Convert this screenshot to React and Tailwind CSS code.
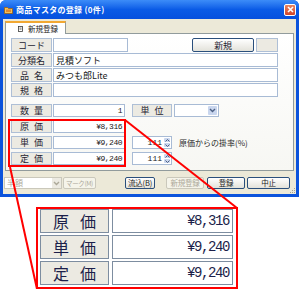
import React from 'react';

const Chevron = ({ color = '#4D6185' }) => (
  <svg width="7" height="5" viewBox="0 0 7 5">
    <path d="M1 1 L3.5 3.5 L6 1" fill="none" stroke={color} strokeWidth="1.4" />
  </svg>
);

function Label({ chars, gap = 'gap-[5px]', w = 'w-[41px]' }) {
  return (
    <div className={`${w} h-full shrink-0 flex items-center justify-center ${gap} bg-[#ECEAE2] border border-[#AEBFD6] text-[9px] text-[#1E2433]`}>
      {chars.map((c, i) => (
        <span key={i}>{c}</span>
      ))}
    </div>
  );
}

function Input({ w, children, right = false }) {
  return (
    <div className={`${w} h-full ml-px flex items-center ${right ? 'justify-end' : ''} px-[2px] bg-white border border-[#A8BBD5] text-[9px] text-[#1A1A1A]`}>
      {children}
    </div>
  );
}

function Money({ value }) {
  return (
    <div className="w-[72px] h-full ml-px flex items-center justify-end pr-[2px] bg-white border border-[#A8BBD5] font-['Liberation_Mono',monospace] text-[8px] tracking-[-0.5px] text-[#1A1A1A]">
      {value}
    </div>
  );
}

function Spinner({ value }) {
  return (
    <div className="w-[40px] h-full ml-[7px] flex bg-white border border-[#A8BBD5]">
      <div className="flex-1 flex items-center justify-end pr-[1px] font-['Liberation_Mono',monospace] text-[8px] text-[#1A1A1A]">{value}</div>
      <div className="w-[8px] flex flex-col gap-px p-px">
        <div className="flex-1 bg-[#C9D6EE] rounded-[1px] flex items-center justify-center">
          <svg width="5" height="3" viewBox="0 0 5 3"><path d="M0.5 2.5 L2.5 0.5 L4.5 2.5" fill="none" stroke="#4D6185" strokeWidth="1" /></svg>
        </div>
        <div className="flex-1 bg-[#C9D6EE] rounded-[1px] flex items-center justify-center">
          <svg width="5" height="3" viewBox="0 0 5 3"><path d="M0.5 0.5 L2.5 2.5 L4.5 0.5" fill="none" stroke="#4D6185" strokeWidth="1" /></svg>
        </div>
      </div>
    </div>
  );
}

function XpButton({ w, ml, children, disabled = false, size = 'text-[7.5px] tracking-[-0.2px]' }) {
  return (
    <div
      className={`${w} ${ml} h-full shrink-0 overflow-hidden whitespace-nowrap flex items-center justify-center rounded-[2px] border ${size} ${
        disabled
          ? 'border-[#CAC8BB] bg-[#F5F4EA] text-[#ACA899]'
          : 'border-[#2A4F7C] bg-gradient-to-b from-white to-[#E3E2DA] text-[#1A1A1A]'
      }`}
    >
      {children}
    </div>
  );
}

function BigRow({ chars, value }) {
  return (
    <div className="h-[24px] flex gap-[3px]">
      <div className="w-[69px] h-full flex items-center justify-center gap-[11px] bg-[#ECEAE2] border border-[#7D8DA0] text-[16px] text-[#1C1F4A]">
        <span>{chars[0]}</span>
        <span>{chars[1]}</span>
      </div>
      <div className="w-[121px] h-full flex items-center justify-end pr-[3px] bg-white border border-[#7D8DA0] font-['Liberation_Mono',monospace] text-[14px] tracking-[-1.4px] text-[#1C1F4A]">
        {value}
      </div>
    </div>
  );
}

export default function App() {
  return (
    <div className="relative w-[300px] h-[289px] bg-white overflow-hidden font-['Noto_Sans_CJK_JP',sans-serif] leading-none">
      {/* window */}
      <div className="w-[299px] h-[197px] flex flex-col bg-[#0B53DC] rounded-t-[6px]">
        {/* title bar */}
        <div className="h-[19px] shrink-0 flex items-center pl-[4px] rounded-t-[6px] bg-gradient-to-b from-[#3C8CF8] via-[#0A5BE6] to-[#0650DE]">
          <svg width="9" height="8" viewBox="0 0 9 8">
            <path d="M0.5 1.5 h3 l1 1 h4 v5 h-8 z" fill="#F3C25A" stroke="#9A6014" strokeWidth="0.8" />
            <rect x="2" y="3.5" width="5" height="2.5" fill="#E08A2E" />
          </svg>
          <span className="ml-[3px] text-[8px] font-bold text-white tracking-[0.3px]">商品マスタの登録 (0件)</span>
          <div className="ml-auto mr-[3px] w-[12px] h-[12px] rounded-[2px] border border-white bg-gradient-to-b from-[#E9835F] to-[#D1442A] flex items-center justify-center">
            <svg width="7" height="7" viewBox="0 0 7 7">
              <path d="M1 1 L6 6 M6 1 L1 6" stroke="white" strokeWidth="1.6" />
            </svg>
          </div>
        </div>

        {/* window body */}
        <div className="relative flex-1 mx-[3px] mb-[3px] bg-[#ECE9D8] flex flex-col">
          {/* tab */}
          <div className="relative z-10 mt-[2px] ml-[2px] w-[61px] h-[13px] -mb-px flex items-center pl-[12px] bg-white border-x border-[#919B9C] border-t-2 border-t-[#F2A832] text-[7.5px] text-[#1A1A1A]">
            <svg width="5" height="6" viewBox="0 0 5 6" className="mr-[5px]">
              <rect x="0.5" y="0.5" width="4" height="5" fill="white" stroke="#3A3A3A" strokeWidth="0.8" />
              <path d="M1.5 2 h2 M1.5 3.2 h2" stroke="#3A3A3A" strokeWidth="0.6" />
            </svg>
            新規登録
          </div>

          {/* tab page */}
          <div className="mx-[2px] h-[138px] border border-[#919B9C] bg-gradient-to-b from-white to-[#F7F7F3] pt-[4px] pl-[5px] flex flex-col gap-px">
            <div className="h-[14px] flex">
              <Label chars={['コード']} />
              <Input w="w-[75px]" />
              <XpButton w="w-[62px]" ml="ml-[64px]">
                <span className="text-[9px] text-[#1E2433]">新規</span>
              </XpButton>
              <div className="w-[22px] ml-[2px] h-full bg-[#ECEAE2] border border-[#AEBFD6]" />
            </div>
            <div className="h-[14px] flex">
              <Label chars={['分類名']} />
              <Input w="w-[225px]">見積ソフト</Input>
            </div>
            <div className="h-[14px] flex">
              <Label chars={['品', '名']} />
              <Input w="w-[225px]">みつも郎Lite</Input>
            </div>
            <div className="h-[14px] flex">
              <Label chars={['規', '格']} />
              <Input w="w-[225px]" />
            </div>

            <div className="h-[13px] mt-[6px] flex">
              <Label chars={['数', '量']} />
              <Money value="1" />
              <div className="ml-[7px] h-full">
                <Label chars={['単', '位']} w="w-[40px]" />
              </div>
              <div className="w-[45px] ml-[2px] h-full flex bg-white border border-[#A8BBD5]">
                <div className="flex-1" />
                <div className="w-[9px] m-px bg-[#C9D6EE] rounded-[1px] flex items-center justify-center">
                  <Chevron />
                </div>
              </div>
            </div>
            <div className="h-[13px] mt-[2px] flex">
              <Label chars={['原', '価']} />
              <Money value="¥8,316" />
            </div>
            <div className="h-[13px] mt-[2px] flex items-center">
              <Label chars={['単', '価']} />
              <Money value="¥9,240" />
              <Spinner value="111" />
              <span className="ml-[7px] text-[8px] text-[#2A2A2A]">原価からの掛率(%)</span>
            </div>
            <div className="h-[13px] mt-[2px] flex">
              <Label chars={['定', '価']} />
              <Money value="¥9,240" />
              <Spinner value="111" />
            </div>
          </div>

          {/* bottom buttons */}
          <div className="h-[12px] mt-[6px] flex">
            <div className="w-[58px] ml-px h-full flex items-center bg-white border border-[#CAC8BB]">
              <span className="flex-1 pl-[2px] text-[8px] text-[#ACA899]">半額</span>
              <div className="w-[9px] h-full flex items-center justify-center bg-[#ECEAE2]">
                <Chevron color="#ACA899" />
              </div>
            </div>
            <XpButton w="w-[33px]" ml="ml-px" size="text-[6.5px] tracking-[-0.4px]" disabled>マーク(M)</XpButton>
            <XpButton w="w-[30px]" ml="ml-[29px]">流込(B)</XpButton>
            <XpButton w="w-[38px]" ml="ml-[11px]" disabled>新規登録</XpButton>
            <XpButton w="w-[38px]" ml="ml-[3px]">登録</XpButton>
            <XpButton w="w-[43px]" ml="ml-[2px]">中止</XpButton>
          </div>

          {/* resize grip */}
          <div className="absolute right-[1px] bottom-[1px] grid grid-cols-3 gap-px">
            <span className="w-px h-px" />
            <span className="w-px h-px" />
            <span className="w-px h-px bg-[#A5A291]" />
            <span className="w-px h-px" />
            <span className="w-px h-px bg-[#A5A291]" />
            <span className="w-px h-px bg-[#A5A291]" />
            <span className="w-px h-px bg-[#A5A291]" />
            <span className="w-px h-px bg-[#A5A291]" />
            <span className="w-px h-px bg-[#A5A291]" />
          </div>
        </div>
      </div>

      {/* enlarged view */}
      <div className="ml-[36px] mt-[10px] w-[202px] h-[82px] border-2 border-[#FF0000] pl-[2px] flex flex-col gap-[2px]">
        <BigRow chars={['原', '価']} value="¥8,316" />
        <BigRow chars={['単', '価']} value="¥9,240" />
        <BigRow chars={['定', '価']} value="¥9,240" />
      </div>

      {/* red callout annotation */}
      <svg className="absolute inset-0 pointer-events-none" width="300" height="289" viewBox="0 0 300 289">
        <rect x="9" y="120" width="116" height="46" fill="none" stroke="#FF0000" strokeWidth="2" />
        <path d="M10 167 L37 289" stroke="#FF0000" strokeWidth="2" />
        <path d="M125 120 L237 208" stroke="#FF0000" strokeWidth="2" />
      </svg>
    </div>
  );
}
